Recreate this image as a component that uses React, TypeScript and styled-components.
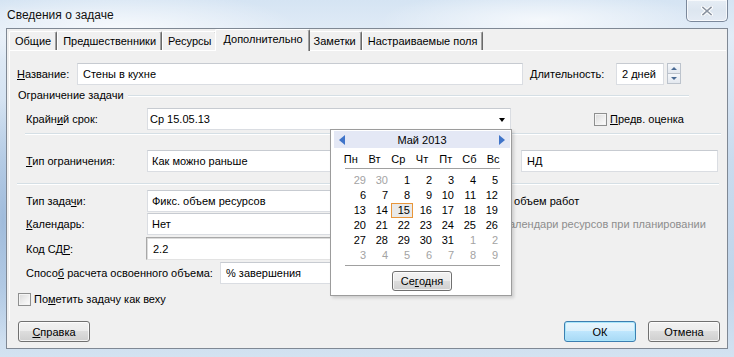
import React from 'react';
import styled, { createGlobalStyle, css } from 'styled-components';

const GlobalStyle = createGlobalStyle`
  html, body {
    margin: 0;
    padding: 0;
  }
  body {
    font-family: "Liberation Sans", Arial, sans-serif;
    font-size: 11px;
    color: #000;
  }
`;

const Window = styled.div`
  position: relative;
  width: 734px;
  height: 357px;
  box-sizing: border-box;
  display: flex;
  flex-direction: column;
  padding: 0 6px 8px 6px;
  overflow: hidden;
  background:
    radial-gradient(ellipse 180px 40px at 120px 30px, rgba(255, 255, 255, 0.75), transparent),
    radial-gradient(ellipse 160px 30px at 540px 20px, rgba(255, 255, 255, 0.7), transparent),
    radial-gradient(ellipse 20px 120px at 3px 220px, rgba(150, 180, 215, 0.8), transparent),
    linear-gradient(180deg, #d5e4f3 0%, #e2ecf7 10%, #c9dbee 45%, #c0d5eb 80%, #d3e2f1 100%);
`;

const TitleBar = styled.div`
  height: 28px;
  flex-shrink: 0;
  display: flex;
  align-items: flex-start;
  justify-content: space-between;
  padding-left: 1px;
`;

const Title = styled.div`
  margin-top: 8px;
  font-size: 12px;
  color: #111;
  text-shadow: 0 0 6px rgba(255, 255, 255, 0.9);
`;

const CloseButton = styled.div`
  width: 42px;
  height: 22px;
  box-sizing: border-box;
  border: 1px solid #7b889b;
  border-top: none;
  border-radius: 0 0 5px 5px;
  background: linear-gradient(180deg, #e6edf5 0%, #dde6f0 50%, #e4ebf4 100%);
  box-shadow: inset 0 0 0 1px rgba(255, 255, 255, 0.7);
  display: flex;
  align-items: center;
  justify-content: center;
`;

const Client = styled.div`
  flex: 1;
  display: flex;
  flex-direction: column;
  background: #f0f0f0;
  border: 1px solid #7f8894;
`;

const TabStrip = styled.div`
  display: flex;
  align-items: flex-end;
  height: 21px;
  margin-left: 2px;
  position: relative;
  z-index: 2;
`;

const Tab = styled.div<{ $active?: boolean }>`
  box-sizing: border-box;
  height: 19px;
  padding: 0 5px 0 5px;
  display: flex;
  align-items: center;
  white-space: nowrap;
  background: #f0f0f0;
  border-top: 1px solid #fff;
  border-left: 1px solid #fff;
  border-right: 1px solid #696969;
  box-shadow: inset -1px 0 0 #a0a0a0;
  border-radius: 2px 2px 0 0;
  ${(p) =>
    p.$active &&
    css`
      height: 22px;
      margin: 0 -2px -1px -2px;
      padding: 0 6px 3px 7px;
      position: relative;
      z-index: 1;
    `}
`;

const Panel = styled.div`
  flex: 1;
  margin: 0 1px 0 2px;
  border-top: 1px solid #fff;
  border-left: 1px solid #fff;
  padding-left: 7px;
  display: flex;
  flex-direction: column;
`;

const Row = styled.div<{ $top: number; $indent?: number; $h?: number }>`
  display: flex;
  align-items: center;
  height: ${(p) => p.$h ?? 22}px;
  margin-top: ${(p) => p.$top}px;
  padding-left: ${(p) => p.$indent ?? 0}px;
  flex-shrink: 0;
`;

const Label = styled.div<{ $w: number; $ml?: number }>`
  width: ${(p) => p.$w}px;
  margin-left: ${(p) => p.$ml ?? 0}px;
  flex-shrink: 0;
  white-space: nowrap;
`;

const Field = styled.div<{ $w: number; $sunken?: boolean; $pad?: number; $ml?: number }>`
  position: relative;
  box-sizing: border-box;
  width: ${(p) => p.$w}px;
  height: 100%;
  flex-shrink: 0;
  margin-left: ${(p) => p.$ml ?? 0}px;
  padding-left: ${(p) => p.$pad ?? 4}px;
  display: flex;
  align-items: center;
  background: #fff;
  border: 1px solid #dadde2;
  border-top-color: #c7cbd1;
  white-space: nowrap;
  ${(p) =>
    p.$sunken &&
    css`
      border-color: #a8a8a8 #e3e3e3 #e3e3e3 #a8a8a8;
      box-shadow: inset 1px 1px 0 #dcdcdc;
    `}
`;

const DropArrow = styled.span`
  position: absolute;
  right: 5px;
  top: 9px;
  width: 0;
  height: 0;
  border-left: 3.5px solid transparent;
  border-right: 3.5px solid transparent;
  border-top: 4px solid #000;
`;

const Spinner = styled.div`
  margin-left: 3px;
  width: 14px;
  height: 21px;
  display: flex;
  flex-direction: column;
  align-self: flex-start;
`;

const SpinHalf = styled.div<{ $up?: boolean }>`
  flex: 1;
  box-sizing: border-box;
  border: 1px solid #bcc3cc;
  ${(p) => (p.$up ? 'border-bottom: none;' : '')}
  background: linear-gradient(180deg, #f6f8fb, #e3e8ef);
  display: flex;
  align-items: center;
  justify-content: center;
  &::after {
    content: '';
    width: 0;
    height: 0;
    border-left: 3px solid transparent;
    border-right: 3px solid transparent;
    ${(p) => (p.$up ? 'border-bottom: 3px solid #4a6a93;' : 'border-top: 3px solid #4a6a93;')}
  }
`;

const GroupHeader = styled.div`
  display: flex;
  align-items: center;
  height: 14px;
  margin-top: 3px;
  padding-left: 1px;
  margin-right: 37px;
  flex-shrink: 0;
`;

const GroupLine = styled.div`
  flex: 1;
  margin-left: 4px;
  height: 1px;
  background: #d5dfe5;
  box-shadow: 0 1px 0 #fff;
`;

const Separator = styled.div<{ $top: number; $left: number; $right: number }>`
  height: 1px;
  flex-shrink: 0;
  margin: ${(p) => p.$top}px ${(p) => p.$right}px 1px ${(p) => p.$left}px;
  background: #d5dfe5;
  box-shadow: 0 1px 0 #fff;
`;

const CheckLabel = styled.label<{ $ml?: number; $disabled?: boolean }>`
  display: flex;
  align-items: center;
  gap: 3px;
  margin-left: ${(p) => p.$ml ?? 0}px;
  white-space: nowrap;
  color: ${(p) => (p.$disabled ? '#8d8d8d' : '#000')};
`;

const CheckBox = styled.span`
  width: 13px;
  height: 13px;
  box-sizing: border-box;
  border: 1px solid #8e8f8f;
  background: linear-gradient(135deg, #d9d9d9 0%, #f0f0f0 60%, #fdfdfd 100%);
  box-shadow: inset 0 0 0 1px #f4f4f4;
  flex-shrink: 0;
`;

const Calendar = styled.div`
  position: absolute;
  left: 182px;
  top: 20px;
  z-index: 10;
  width: 182px;
  height: 167px;
  box-sizing: border-box;
  border: 1px solid #9c9c9c;
  background: #fff;
  box-shadow: 2px 2px 3px rgba(0, 0, 0, 0.15);
  padding: 1px 1px 0 3px;
  display: flex;
  flex-direction: column;
  align-items: center;
  cursor: default;
`;

const CalHeader = styled.div`
  align-self: stretch;
  height: 17px;
  background: #e4e8f5;
  display: flex;
  align-items: center;
  justify-content: space-between;
  padding: 0 5px;
`;

const Arrow = styled.span<{ $right?: boolean }>`
  width: 0;
  height: 0;
  border-top: 5px solid transparent;
  border-bottom: 5px solid transparent;
  ${(p) =>
    p.$right
      ? 'border-left: 6px solid #3f74c9;'
      : 'border-right: 6px solid #3f74c9;'}
`;

const Weekdays = styled.div`
  margin-top: 4px;
  width: 166px;
  height: 14px;
  display: grid;
  grid-template-columns: repeat(7, 1fr);
  text-align: center;
  line-height: 14px;
`;

const CalLine = styled.div<{ $top: number }>`
  width: 155px;
  height: 1px;
  margin-top: ${(p) => p.$top}px;
  background: #a0a0a0;
`;

const Days = styled.div`
  margin-top: 4px;
  width: 154px;
  display: grid;
  grid-template-columns: repeat(7, 22px);
  grid-auto-rows: 15px;
`;

const Day = styled.div<{ $muted?: boolean; $selected?: boolean }>`
  position: relative;
  text-align: right;
  padding-right: 1px;
  line-height: 15px;
  color: ${(p) => (p.$muted ? '#a3a3a3' : '#000')};
  ${(p) =>
    p.$selected &&
    css`
      &::before {
        content: '';
        position: absolute;
        left: 2px;
        right: -2px;
        top: 0;
        bottom: 0;
        border: 1px solid #e8963a;
        background: #e9e9e9;
        z-index: -1;
      }
      z-index: 0;
    `}
`;

const Button = styled.div<{ $default?: boolean; $w?: number }>`
  width: ${(p) => p.$w ?? 72}px;
  height: 21px;
  box-sizing: border-box;
  display: flex;
  align-items: center;
  justify-content: center;
  border: 1px solid #707070;
  border-radius: 3px;
  background: linear-gradient(180deg, #f2f2f2 0%, #ebebeb 49%, #dddddd 50%, #cfcfcf 100%);
  box-shadow: inset 0 0 0 1px rgba(255, 255, 255, 0.75);
  ${(p) =>
    p.$default &&
    css`
      border-color: #3c7fb1;
      background: linear-gradient(180deg, #eaf6fd 0%, #d9f0fc 49%, #bee6fd 50%, #a7d9f5 100%);
      box-shadow: inset 0 0 0 1px #a9e6fb;
    `}
`;

const TodayButton = styled(Button)`
  margin-top: 5px;
  height: 20px;
`;

const Footer = styled.div`
  display: flex;
  align-items: center;
  padding: 0 7px 6px 11px;
  gap: 12px;
`;

const Spacer = styled.div`
  flex: 1;
`;

const weeks: { d: number; m?: boolean }[][] = [
  [{ d: 29, m: true }, { d: 30, m: true }, { d: 1 }, { d: 2 }, { d: 3 }, { d: 4 }, { d: 5 }],
  [{ d: 6 }, { d: 7 }, { d: 8 }, { d: 9 }, { d: 10 }, { d: 11 }, { d: 12 }],
  [{ d: 13 }, { d: 14 }, { d: 15 }, { d: 16 }, { d: 17 }, { d: 18 }, { d: 19 }],
  [{ d: 20 }, { d: 21 }, { d: 22 }, { d: 23 }, { d: 24 }, { d: 25 }, { d: 26 }],
  [{ d: 27 }, { d: 28 }, { d: 29 }, { d: 30 }, { d: 31 }, { d: 1, m: true }, { d: 2, m: true }],
  [3, 4, 5, 6, 7, 8, 9].map((d) => ({ d, m: true })),
];

const tabs = ['Общие', 'Предшественники', 'Ресурсы', 'Дополнительно', 'Заметки', 'Настраиваемые поля'];

const CloseGlyph = () => (
  <svg width="12" height="10" viewBox="0 0 12 10">
    <path
      d="M2 1.5 L10 8.5 M10 1.5 L2 8.5"
      stroke="#ffffff"
      strokeWidth="3.6"
      strokeLinecap="square"
      fill="none"
    />
    <path
      d="M2 1.5 L10 8.5 M10 1.5 L2 8.5"
      stroke="#8a93a1"
      strokeWidth="1.6"
      strokeLinecap="square"
      fill="none"
    />
  </svg>
);

const DateCalendar = () => (
  <Calendar>
    <CalHeader>
      <Arrow />
      <span>Май 2013</span>
      <Arrow $right />
    </CalHeader>
    <Weekdays>
      {['Пн', 'Вт', 'Ср', 'Чт', 'Пт', 'Сб', 'Вс'].map((w) => (
        <span key={w}>{w}</span>
      ))}
    </Weekdays>
    <CalLine $top={2} />
    <Days>
      {weeks.flat().map((c, i) => (
        <Day key={i} $muted={c.m} $selected={!c.m && c.d === 15}>
          {c.d}
        </Day>
      ))}
    </Days>
    <CalLine $top={2} />
    <TodayButton $w={60}>
      Се<u>г</u>одня
    </TodayButton>
  </Calendar>
);

export default function App() {
  return (
    <Window>
      <GlobalStyle />
      <TitleBar>
        <Title>Сведения о задаче</Title>
        <CloseButton>
          <CloseGlyph />
        </CloseButton>
      </TitleBar>
      <Client>
        <TabStrip>
          {tabs.map((t) => (
            <Tab key={t} $active={t === 'Дополнительно'}>
              {t}
            </Tab>
          ))}
        </TabStrip>
        <Panel>
          <Row $top={12}>
            <Label $w={60}>
              <u>Н</u>азвание:
            </Label>
            <Field $w={446} $pad={5}>
              Стены в кухне
            </Field>
            <Label $w={86} $ml={7}>
              <u>Д</u>лительность:
            </Label>
            <Field $w={48} $pad={5}>
              2 дней
            </Field>
            <Spinner>
              <SpinHalf $up />
              <SpinHalf />
            </Spinner>
          </Row>

          <GroupHeader>
            Ограничение задачи
            <GroupLine />
          </GroupHeader>

          <Row $top={6} $indent={9}>
            <Label $w={121}>
              Крайн<u>и</u>й срок:
            </Label>
            <Field $w={364} $pad={2}>
              Ср 15.05.13
              <DropArrow />
              <DateCalendar />
            </Field>
            <CheckLabel $ml={83}>
              <CheckBox />
              <span>
                <u>П</u>редв. оценка
              </span>
            </CheckLabel>
          </Row>

          <Separator $top={3} $left={8} $right={5} />

          <Row $top={15} $indent={9}>
            <Label $w={121}>
              <u>Т</u>ип ограничения:
            </Label>
            <Field $w={364}>Как можно раньше</Field>
            <Field $w={197} $ml={10} $pad={5}>
              НД
            </Field>
          </Row>

          <Separator $top={11} $left={0} $right={7} />

          <Row $top={5} $indent={9}>
            <Label $w={121}>
              Тип зада<u>ч</u>и:
            </Label>
            <Field $w={300}>Фикс. объем ресурсов</Field>
            <CheckLabel $ml={20}>
              <CheckBox />
              <span>Фикс. объем работ</span>
            </CheckLabel>
          </Row>

          <Row $top={1} $indent={9}>
            <Label $w={121}>
              <u>К</u>алендарь:
            </Label>
            <Field $w={260}>Нет</Field>
            <CheckLabel $ml={8} $disabled>
              <CheckBox />
              <span>Не учитывать календари ресурсов при планировании</span>
            </CheckLabel>
          </Row>

          <Row $top={2} $indent={9} $h={23}>
            <Label $w={120}>
              Код СД<u>Р</u>:
            </Label>
            <Field $w={365} $sunken $pad={6}>
              2.2
            </Field>
          </Row>

          <Row $top={2} $indent={9}>
            <Label $w={194}>
              Спосо<u>б</u> расчета освоенного объема:
            </Label>
            <Field $w={290} $pad={5}>
              % завершения
            </Field>
          </Row>

          <Row $top={8} $indent={1} $h={14}>
            <CheckLabel>
              <CheckBox />
              <span>
                По<u>м</u>етить задачу как веху
              </span>
            </CheckLabel>
          </Row>
        </Panel>
        <Footer>
          <Button>
            <span>
              <u>С</u>правка
            </span>
          </Button>
          <Spacer />
          <Button $default>ОК</Button>
          <Button>Отмена</Button>
        </Footer>
      </Client>
    </Window>
  );
}
